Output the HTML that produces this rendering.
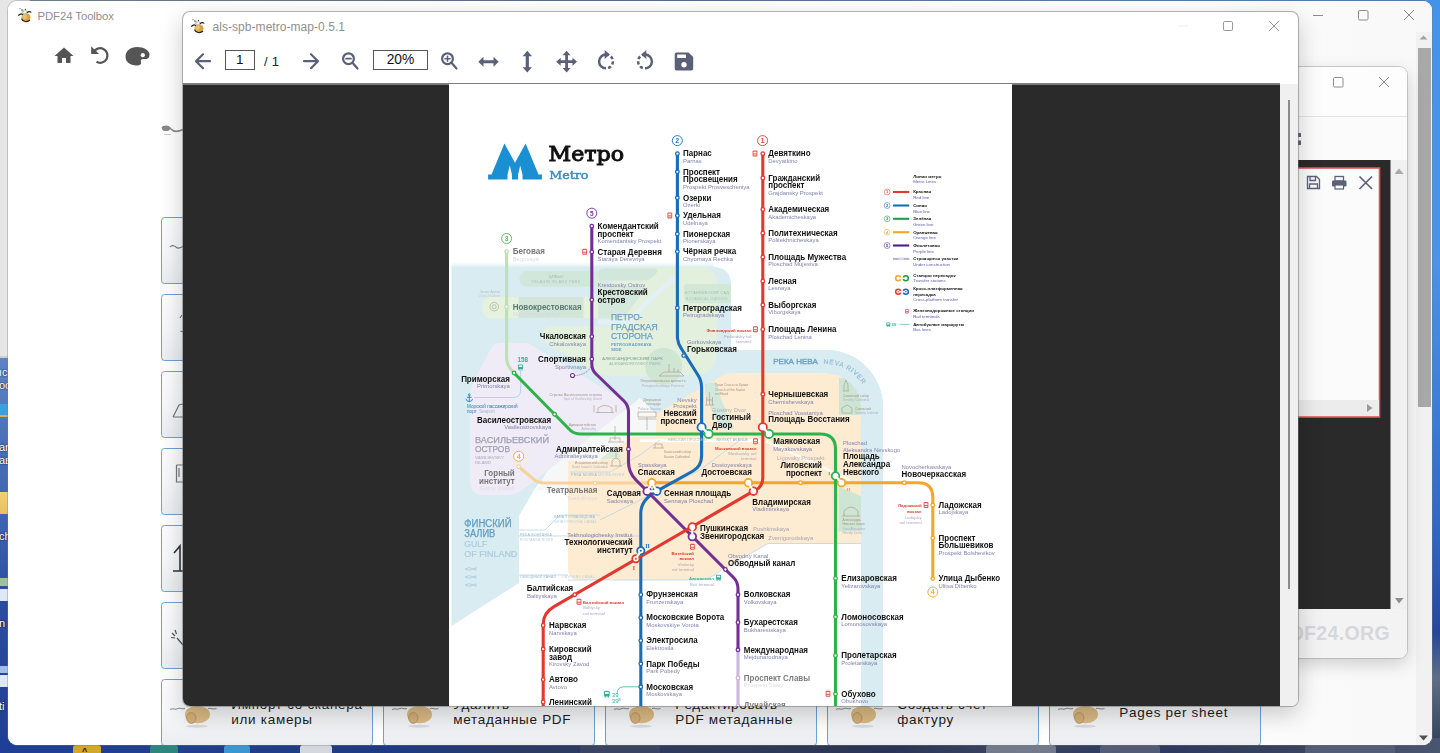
<!DOCTYPE html><html lang="ru"><head><meta charset="utf-8"><title>PDF24 Toolbox</title><style>
*{box-sizing:border-box;margin:0;padding:0}
html,body{width:1440px;height:753px;overflow:hidden;background:#1d3f8c;font-family:"Liberation Sans",sans-serif}
#desk{position:absolute;left:0;top:0;width:1440px;height:753px;overflow:hidden;
 background:linear-gradient(180deg,#3f78c9 0%,#4a8fe0 8%,#4a86d8 40%,#2f62b5 70%,#223f86 100%)}
.abs{position:absolute}
#tb{position:absolute;left:8px;top:1px;width:1424px;height:744px;background:#fff;border-radius:9px;overflow:hidden;
 box-shadow:0 0 0 1px rgba(120,120,120,.35)}
#tbbg{position:absolute;left:0;top:0;width:100%;height:100%;background:linear-gradient(90deg,#fff 0,#fff 1200px,#fafafa 1320px,#f8f8f8 100%)}
.ttl{position:absolute;font-size:12px;color:#8f8f8f;white-space:nowrap}
.card{position:absolute;width:212px;height:67px;border:1px solid #6aa2dc;border-radius:3.5px;
 background:linear-gradient(180deg,#fdfdfe 0%,#f6f7f9 55%,#ebedf1 100%)}
.ctxt{position:absolute;left:69.3px;font-size:13.5px;line-height:14.4px;color:#1c1c1c;letter-spacing:.7px;white-space:nowrap}
#w3{position:absolute;left:1290px;top:67px;width:117px;height:591px;background:#fbfbfb;border-radius:8px;overflow:hidden;
 box-shadow:0 0 0 1px rgba(150,150,150,.45),0 6px 18px rgba(0,0,0,.18)}
#vw{position:absolute;left:183px;top:12px;width:1114.5px;height:694px;background:#fff;border-radius:7px;overflow:hidden;
 box-shadow:0 0 0 1px rgba(110,110,110,.5),0 8px 24px rgba(0,0,0,.22)}
#vdark{position:absolute;left:0;top:72px;width:1097px;height:622px;background:#2a2a2a}
#vsb{position:absolute;left:1097px;top:72px;width:18px;height:622px;background:#f0f0f0}
#vline{position:absolute;left:0;top:71px;width:1097px;height:1.5px;background:#7d7d7d}
.inp{position:absolute;border:1px solid #555;background:#fff;font-size:13px;text-align:center;color:#111}
svg{position:absolute;overflow:visible}
</style></head><body><div id="desk"><div class="abs" style="left:0;top:0;width:9px;height:358px;background:#e6e6e6"></div><div class="abs" style="left:0;top:0;width:31px;height:12px;background:#e6e6e6"></div><div class="abs" style="left:0;top:356px;width:9px;height:2px;background:#cfcfcf"></div><div class="abs" style="left:0;top:358px;width:10px;height:395px;background:linear-gradient(180deg,#5f83c4 0,#4a6fb8 22%,#3b60ae 45%,#2b4aa0 62%,#233f95 100%)"></div><div class="abs" style="left:0;top:404px;width:9px;height:12px;background:#3aa0e0"></div><div class="abs" style="left:0;top:415px;width:9px;height:2px;background:#e0b050"></div><div class="abs" style="left:0;top:492px;width:9px;height:22px;background:linear-gradient(180deg,#f0d070,#e8c060)"></div><div class="abs" style="left:0;top:578px;width:8px;height:8px;background:#9fc48f"></div><div class="abs" style="left:0;top:589px;width:8px;height:12px;background:#dfe8f6"></div><div class="abs" style="left:0;top:666px;width:8px;height:7px;background:#9fbfea"></div><div class="abs" style="left:0;top:675px;width:8px;height:12px;background:#dfe8f6"></div><div class="abs" style="left:-1px;top:366px;font-size:11px;color:#fff;letter-spacing:0;text-shadow:0 0 2px #000">ıc</div><div class="abs" style="left:-1px;top:379px;font-size:11px;color:#fff;letter-spacing:0;text-shadow:0 0 2px #000">oc</div><div class="abs" style="left:-1px;top:441px;font-size:11px;color:#fff;letter-spacing:0;text-shadow:0 0 2px #000">ar</div><div class="abs" style="left:-1px;top:454px;font-size:11px;color:#fff;letter-spacing:0;text-shadow:0 0 2px #000">aв</div><div class="abs" style="left:-1px;top:530px;font-size:11px;color:#fff;letter-spacing:0;text-shadow:0 0 2px #000">ch</div><div class="abs" style="left:-1px;top:617px;font-size:11px;color:#fff;letter-spacing:0;text-shadow:0 0 2px #000">n</div><div class="abs" style="left:-1px;top:700px;font-size:11px;color:#fff;letter-spacing:0;text-shadow:0 0 2px #000">ti</div><div class="abs" style="left:30px;top:0;width:1410px;height:2px;background:linear-gradient(90deg,#6b7f9a,#46618f 40%,#4a7ab8 70%,#3d7fd0)"></div><div class="abs" style="left:1425px;top:0;width:15px;height:753px;background:linear-gradient(180deg,#4493ea 0,#4a93e6 35%,#3b7dd6 55%,#2f64bf 72%,#27469a 84%,#5f6f86 90%,#2d3b55 100%)"></div><div class="abs" style="left:0;top:738px;width:1440px;height:15px;background:linear-gradient(90deg,#1f3f96 0,#20408f 10%,#1e3a80 28%,#2a3a66 36%,#303a58 50%,#2b3456 62%,#3a4560 70%,#2c3860 80%,#39435e 90%,#4a5570 100%)"></div><div class="abs" style="left:73px;top:745px;width:28px;height:8px;background:#e5b41c;opacity:.9;border-radius:3px 3px 0 0"></div><div class="abs" style="left:150px;top:745px;width:28px;height:8px;background:#2f8f7c;opacity:.9;border-radius:3px 3px 0 0"></div><div class="abs" style="left:224px;top:745px;width:26px;height:8px;background:#3fa0d8;opacity:.9;border-radius:3px 3px 0 0"></div><div class="abs" style="left:300px;top:745px;width:32px;height:8px;background:#e8e8e8;opacity:.9;border-radius:3px 3px 0 0"></div><div class="abs" style="left:580px;top:745px;width:80px;height:8px;background:#3c4663;opacity:.9;border-radius:3px 3px 0 0"></div><div class="abs" style="left:986px;top:745px;width:70px;height:8px;background:#7a8190;opacity:.9;border-radius:3px 3px 0 0"></div><div class="abs" style="left:1100px;top:745px;width:60px;height:8px;background:#58617a;opacity:.9;border-radius:3px 3px 0 0"></div><div class="abs" style="left:1305px;top:745px;width:90px;height:8px;background:#555f78;opacity:.9;border-radius:3px 3px 0 0"></div><div class="abs" style="left:82px;top:746px;font-size:9px;font-weight:bold;color:#222">^</div></div><div id="tb"><div id="tbbg"></div><svg style="left:8.5px;top:5.5px" width="16.2" height="16.2" viewBox="0 0 18 18"><ellipse cx="10" cy="11.5" rx="5" ry="4.6" fill="#d9a441"/><ellipse cx="8.5" cy="10.5" rx="2.5" ry="3" fill="#e8c36a"/><path d="M5 13 C6 16.5 11.5 17.3 14.5 14.5" fill="none" stroke="#222" stroke-width="1.3"/><path d="M1.5 9.5 C3 7.5 5 7.3 6.5 8.5" fill="none" stroke="#222" stroke-width="1.4"/><path d="M11 6.5 C12.5 4.8 14.5 5 16 6" fill="none" stroke="#222" stroke-width="1.2"/><ellipse cx="8.3" cy="5.6" rx="2.6" ry="2.2" fill="#f4f4f4" stroke="#777" stroke-width=".5"/><circle cx="5.5" cy="3.3" r=".8" fill="#333"/><circle cx="9.5" cy="2.6" r=".7" fill="#333"/><circle cx="3.3" cy="1.8" r=".6" fill="#555"/><circle cx="7.5" cy="5.2" r=".6" fill="#7a9a2a"/></svg><div class="ttl" style="left:29.5px;top:8.5px;font-size:11.4px;letter-spacing:-.1px">PDF24 Toolbox</div><svg style="left:0;top:0" width="200" height="80" viewBox="8 1 200 80"><g fill="#555"><path d="M64 47.5 L54.5 56 H57.5 V63 H62 V58 H66 V63 H70.5 V56 H73.5 Z"/><path d="M125.5 56.5 C125.5 51 130.5 47 137 47 C144 47 149.5 50.5 149.5 55 C149.5 58.5 146.5 59.5 144 59 C141.5 58.6 140.2 60 141 62 C141.8 64 140 65.5 136.5 65.5 C130 65.5 125.5 62 125.5 56.5 Z"/></g><circle cx="142.8" cy="55.2" r="2.1" fill="#fff"/><path d="M93.5 52.5 A7.3 7.3 0 1 1 96.5 61.8" fill="none" stroke="#555" stroke-width="2.3"/><path d="M91.2 46.2 V54 H99 Z" fill="#555"/></svg><svg style="left:0;top:0" width="1424" height="40" viewBox="8 1 1424 40"><g fill="none" stroke="#8c8c8c" stroke-width="1"><path d="M1313 15.5 H1323"/><rect x="1358.5" y="10.5" width="9.5" height="9.5" rx="1.3"/><path d="M1404 10 L1414 20 M1414 10 L1404 20"/></g></svg><div class="abs" style="left:1408px;top:31px;width:16px;height:713px;background:#f1f1f1"></div><div class="abs" style="left:1409.5px;top:47px;width:13px;height:359px;background:#a8a8a8"></div><svg style="left:0;top:0" width="1424" height="744" viewBox="8 1 1424 744"><path d="M1419.5 39.5 L1427.5 39.5 L1423.5 35.5 Z" fill="#a3a3a3"/><path d="M1419 735.5 L1428 735.5 L1423.5 740.5 Z" fill="#505050"/></svg><svg style="left:0;top:0" width="300" height="200" viewBox="8 1 300 200"><path d="M162 128 C164 125 169 126 171 129 C174 132.5 178 132 183 129.5" fill="none" stroke="#8a8a8a" stroke-width="1.6"/><ellipse cx="166" cy="128.5" rx="4" ry="2.6" fill="#8a8a8a"/><path d="M164 134.5 H171" stroke="#cfcfcf" stroke-width="1"/></svg><div class="card" style="left:153px;top:216px"></div><div class="card" style="left:153px;top:293px"></div><div class="card" style="left:153px;top:370px"></div><div class="card" style="left:153px;top:447px"></div><div class="card" style="left:153px;top:524px"></div><div class="card" style="left:153px;top:601px"></div><div class="card" style="left:153px;top:678px"><svg style="left:8px;top:20px" width="52" height="32" viewBox="0 0 52 32"><path d="M0 9.5 C3 7.5 5 10.5 8 8.5 C10 7.5 12 9.5 15 8.5" fill="none" stroke="#8a8a8a" stroke-width="1"/><path d="M38 8.5 C40.5 7.5 43 10 46.5 8.5" fill="none" stroke="#8a8a8a" stroke-width="1"/><ellipse cx="27.5" cy="14.5" rx="12.5" ry="8.8" fill="#dcbb85"/><ellipse cx="21.3" cy="18" rx="4.7" ry="5.4" fill="#d4b077" stroke="#a98d5c" stroke-width=".7"/><ellipse cx="27" cy="26.3" rx="11" ry="1.5" fill="#dadadd"/></svg><div class="ctxt" style="top:18.4px">Импорт со сканера<br>или камеры</div></div><div class="card" style="left:375px;top:678px"><svg style="left:8px;top:20px" width="52" height="32" viewBox="0 0 52 32"><path d="M0 9.5 C3 7.5 5 10.5 8 8.5 C10 7.5 12 9.5 15 8.5" fill="none" stroke="#8a8a8a" stroke-width="1"/><path d="M38 8.5 C40.5 7.5 43 10 46.5 8.5" fill="none" stroke="#8a8a8a" stroke-width="1"/><ellipse cx="27.5" cy="14.5" rx="12.5" ry="8.8" fill="#dcbb85"/><ellipse cx="21.3" cy="18" rx="4.7" ry="5.4" fill="#d4b077" stroke="#a98d5c" stroke-width=".7"/><ellipse cx="27" cy="26.3" rx="11" ry="1.5" fill="#dadadd"/></svg><div class="ctxt" style="top:18.4px">Удалить<br>метаданные PDF</div></div><div class="card" style="left:597px;top:678px"><svg style="left:8px;top:20px" width="52" height="32" viewBox="0 0 52 32"><path d="M0 9.5 C3 7.5 5 10.5 8 8.5 C10 7.5 12 9.5 15 8.5" fill="none" stroke="#8a8a8a" stroke-width="1"/><path d="M38 8.5 C40.5 7.5 43 10 46.5 8.5" fill="none" stroke="#8a8a8a" stroke-width="1"/><ellipse cx="27.5" cy="14.5" rx="12.5" ry="8.8" fill="#dcbb85"/><ellipse cx="21.3" cy="18" rx="4.7" ry="5.4" fill="#d4b077" stroke="#a98d5c" stroke-width=".7"/><ellipse cx="27" cy="26.3" rx="11" ry="1.5" fill="#dadadd"/></svg><div class="ctxt" style="top:18.4px">Редактировать<br>PDF метаданные</div></div><div class="card" style="left:819px;top:678px"><svg style="left:8px;top:20px" width="52" height="32" viewBox="0 0 52 32"><path d="M0 9.5 C3 7.5 5 10.5 8 8.5 C10 7.5 12 9.5 15 8.5" fill="none" stroke="#8a8a8a" stroke-width="1"/><path d="M38 8.5 C40.5 7.5 43 10 46.5 8.5" fill="none" stroke="#8a8a8a" stroke-width="1"/><ellipse cx="27.5" cy="14.5" rx="12.5" ry="8.8" fill="#dcbb85"/><ellipse cx="21.3" cy="18" rx="4.7" ry="5.4" fill="#d4b077" stroke="#a98d5c" stroke-width=".7"/><ellipse cx="27" cy="26.3" rx="11" ry="1.5" fill="#dadadd"/></svg><div class="ctxt" style="top:18.4px">Создать счет-<br>фактуру</div></div><div class="card" style="left:1041px;top:678px"><svg style="left:8px;top:20px" width="52" height="32" viewBox="0 0 52 32"><path d="M0 9.5 C3 7.5 5 10.5 8 8.5 C10 7.5 12 9.5 15 8.5" fill="none" stroke="#8a8a8a" stroke-width="1"/><path d="M38 8.5 C40.5 7.5 43 10 46.5 8.5" fill="none" stroke="#8a8a8a" stroke-width="1"/><ellipse cx="27.5" cy="14.5" rx="12.5" ry="8.8" fill="#dcbb85"/><ellipse cx="21.3" cy="18" rx="4.7" ry="5.4" fill="#d4b077" stroke="#a98d5c" stroke-width=".7"/><ellipse cx="27" cy="26.3" rx="11" ry="1.5" fill="#dadadd"/></svg><div class="ctxt" style="top:25.9px">Pages per sheet</div></div><svg style="left:0;top:0" width="300" height="744" viewBox="8 1 300 744"><g fill="none" stroke="#777" stroke-width="1.2"><path d="M170 247 C172 244.5 175 246 176.5 247.5 C178 249 180 248 183 246.5"/><path d="M180 318 l2 -3 M180.5 331 l2.5 1"/><path d="M173 417 L179 405 L183 404 M173 417 H183"/><path d="M176.5 465 V482 H183 M176.5 465 H183 M179 468 v9"/><path d="M174 553 L180 546 V571 M173 571 H183" stroke="#333" stroke-width="1.6"/><path d="M172 633 l3 3 M175 630 l1.5 4 M171 637.5 l4 .5 M177 638 L183 645" stroke="#555"/></g></svg></div><div id="w3"><div class="abs" style="left:0;top:0;width:117px;height:50px;background:#fdfdfd;border-bottom:1px solid #e3e3e3"></div><svg style="left:0;top:0" width="117" height="591" viewBox="1290 67 117 591"><g fill="none" stroke="#8c8c8c" stroke-width="1"><rect x="1333.5" y="77.5" width="9.5" height="9.5" rx="1.3"/><path d="M1379 77 L1389 87 M1389 77 L1379 87"/></g><rect x="1297" y="133" width="4" height="4" fill="#5d6279"/><rect x="1297" y="140.5" width="4" height="4.5" fill="#5d6279"/><rect x="1390" y="160" width="17" height="449" fill="#f0f0f0"/><rect x="1290" y="160" width="100.5" height="449" fill="#2a2a2a"/><rect x="1290" y="168" width="89.5" height="249" fill="#fbfbfb" stroke="#e0545c" stroke-width="1.6"/><rect x="1290" y="400" width="89" height="16" fill="#ececec"/><path d="M1367 404 L1372.5 408 L1367 412 Z" fill="#9a9a9a"/><g fill="none" stroke="#5d6279" stroke-width="1.3"><path d="M1307.5 176.5 H1316.5 L1319.5 179.5 V188.5 H1307.5 Z"/><path d="M1310 176.5 V180.5 H1315.5 V176.5"/><path d="M1309.5 188.5 V184 H1317.5 V188.5"/></g><g fill="#5d6279"><rect x="1335" y="176.5" width="8.5" height="4.5" fill="none" stroke="#5d6279" stroke-width="1.3"/><rect x="1332" y="180.5" width="14.5" height="6" rx="1.2"/><rect x="1335" y="185" width="8.5" height="4" fill="#fff" stroke="#5d6279" stroke-width="1.2"/></g><path d="M1359.5 176.5 L1372 189 M1372 176.5 L1359.5 189" stroke="#5d6279" stroke-width="1.7" fill="none"/><path d="M1394.5 174 L1403.5 174 L1399 168.5 Z" fill="#a9a9a9"/><path d="M1395 598 L1403.5 598 L1399 603.5 Z" fill="#8f8f8f"/><rect x="1290" y="609" width="117" height="49" fill="#f3f3f3"/><text x="1390" y="640" text-anchor="end" font-family="Liberation Sans,sans-serif" font-weight="bold" font-size="19.5" fill="#d6d7db" letter-spacing=".35">PDF24.ORG</text></svg></div><div id="vw"><svg style="left:7px;top:5.5px" width="16.2" height="16.2" viewBox="0 0 18 18"><ellipse cx="10" cy="11.5" rx="5" ry="4.6" fill="#d9a441"/><ellipse cx="8.5" cy="10.5" rx="2.5" ry="3" fill="#e8c36a"/><path d="M5 13 C6 16.5 11.5 17.3 14.5 14.5" fill="none" stroke="#222" stroke-width="1.3"/><path d="M1.5 9.5 C3 7.5 5 7.3 6.5 8.5" fill="none" stroke="#222" stroke-width="1.4"/><path d="M11 6.5 C12.5 4.8 14.5 5 16 6" fill="none" stroke="#222" stroke-width="1.2"/><ellipse cx="8.3" cy="5.6" rx="2.6" ry="2.2" fill="#f4f4f4" stroke="#777" stroke-width=".5"/><circle cx="5.5" cy="3.3" r=".8" fill="#333"/><circle cx="9.5" cy="2.6" r=".7" fill="#333"/><circle cx="3.3" cy="1.8" r=".6" fill="#555"/><circle cx="7.5" cy="5.2" r=".6" fill="#7a9a2a"/></svg><div class="ttl" style="left:29.5px;top:8px;letter-spacing:.05px">als-spb-metro-map-0.5.1</div><svg style="left:0;top:0" width="1115" height="72" viewBox="183 12 1115 72"><g fill="none" stroke="#9a9a9a" stroke-width="1"><rect x="1223.5" y="21.5" width="9" height="9" rx="1.3"/><path d="M1269 21 L1279 31 M1279 21 L1269 31"/><path d="M1178 26 H1188" stroke="#ececec"/></g><g fill="none" stroke="#5a6078" stroke-width="2.2" stroke-linecap="round" stroke-linejoin="round"><path d="M210 61.2 H196.5 M203 54.3 L196 61.2 L203 68.2"/><path d="M304 61.2 H317.5 M311 54.3 L318 61.2 L311 68.2"/><circle cx="348.5" cy="58.7" r="5.4"/><path d="M352.7 63 L357.5 68.5"/><path d="M346 58.7 H351" stroke-width="1.7"/><circle cx="447.5" cy="58.7" r="5.4"/><path d="M451.7 63 L456.5 68.5"/><path d="M445 58.7 H450 M447.5 56.2 V61.2" stroke-width="1.6"/></g><g fill="#5a6078"><path d="M478.3 61.8 L483.5 56.8 V60.3 H493.5 V56.8 L498.7 61.8 L493.5 66.8 V63.3 H483.5 V66.8 Z"/><path d="M527.3 50.8 L532 56.2 H528.9 V67.2 H532 L527.3 72.6 L522.6 67.2 H525.7 V56.2 H522.6 Z"/><path d="M566.6 50.8 L570.6 55.3 H568 V60.3 H572.5 V57.7 L577 61.7 L572.5 65.7 V63.1 H568 V68 H570.6 L566.6 72.5 L562.6 68 H565.2 V63.1 H560.7 V65.7 L556.2 61.7 L560.7 57.7 V60.3 H565.2 V55.3 H562.6 Z"/><path d="M676.7 52.4 H688.5 L693.2 57 V68.6 Q693.2 70.6 691.2 70.6 H676.7 Q674.7 70.6 674.7 68.6 V54.4 Q674.7 52.4 676.7 52.4 Z M677.2 54.6 V57.9 H686 V54.6 Z M684 62 A2.7 2.7 0 1 0 684 67.4 A2.7 2.7 0 1 0 684 62 Z" fill-rule="evenodd"/><path d="M604.7 49.9 L609.7 54.4 L604.7 58.9 Z"/><path d="M646.3 49.9 L641.3 54.4 L646.3 58.9 Z"/></g><g fill="none" stroke="#5a6078" stroke-width="2.5"><path d="M606 54.5 A6.9 6.9 0 0 0 606 68.3"/><path d="M606 68.3 A6.9 6.9 0 0 0 606 54.5" stroke-dasharray="3.2 2.2" stroke-dashoffset="3.2"/><path d="M645 54.5 A6.9 6.9 0 0 1 645 68.3"/><path d="M645 68.3 A6.9 6.9 0 0 1 645 54.5" stroke-dasharray="3.2 2.2" stroke-dashoffset="3.2"/></g></svg><div class="inp" style="left:42px;top:38px;width:29.5px;height:20px;line-height:18px;font-size:13.5px">1</div><div class="abs" style="left:81px;top:41.5px;font-size:13px;color:#222;letter-spacing:.3px">/ 1</div><div class="inp" style="left:190px;top:38px;width:55px;height:20px;line-height:18px;font-size:13.8px">20%</div><div id="vdark"></div><div id="vline"></div><div id="vsb"></div><div class="abs" style="left:1104.5px;top:88px;width:2px;height:489px;background:#8a8a8a"></div><div class="abs" style="left:266px;top:72px;width:563px;height:622px;background:#fff;overflow:hidden"><svg style="left:0;top:0;will-change:transform" width="563" height="622" viewBox="449 84 563 622" font-family="Liberation Sans,sans-serif" font-size="9" font-weight="bold" fill="#111"><defs><linearGradient id="wf" x1="0" y1="0" x2="0" y2="1"><stop offset="0" stop-color="#fff"/><stop offset="1" stop-color="#d8ecf2"/></linearGradient></defs><path d="M451.5 267 H713 Q731 267 731 285 V350 H826 A57 57 0 0 1 883 407 V706 H861 V407 A34 34 0 0 0 827 373.5 H735 L640 430 L540 482 L534 490 L519 516 V583 L451.5 626 Z" fill="#d8ecf2"/><rect x="451.5" y="262" width="262" height="6" fill="url(#wf)"/><path d="M640 398 L656 414 V437 H632 L598 461 H568 V490 H536 L548 470 Z" fill="#f6f8f7"/><rect x="519.5" y="270.8" width="89.5" height="16" rx="8" fill="#d9eadf"/><path d="M527.5 270.8 H590 V286.8 H527.5 A8 8 0 0 1 527.5 270.8 Z" fill="#d2e7dc"/><path d="M490 297 H610 Q622 297 622 305 V312 Q622 318 612 318 H490 Q482 318 482 307.5 Q482 297 490 297 Z" fill="#e6f1de"/><rect x="518.5" y="297" width="65" height="21" fill="#d2e5d8"/><path d="M556 326 H606 Q612 326 612 318 V284 Q612 267 628 267 H700 Q717 267 717 284 V350 Q717 372 700 374 L652 376 H612 Q602 376 594 371.5 L548 345 Q539 339.5 542 332.5 Q545 326 556 326 Z" fill="#e4f0de"/><path d="M686 284 H728 Q731 284 731 288 V300 Q731 303 728 303 H690 Q684 303 684 296 V288 Q684 284 686 284 Z" fill="#d3e7d6"/><circle cx="663.7" cy="366.3" r="18.5" fill="#d0e6d4"/><path d="M600 322 H630 L645 304 L673 279" fill="none" stroke="#e2f1f5" stroke-width="5" stroke-linecap="round" stroke-linejoin="round"/><path d="M604 268.5 H652 Q660 268.5 656 274 L650 279 Q648 280.5 644 280.5 H604 Q598 280.5 598 274.5 Q598 268.5 604 268.5Z" fill="#d2e7dc"/><path d="M598 291 Q598 286 604 286 H640 Q648 286 643 292 L628 312 Q624 318 616 318 H598 Z" fill="#d4e8dc"/><path d="M500 343 H528 L622 399.5 Q629 404 623 411 L524 489 Q516 495 506 495 H484 Q470 495 470 481 V396 Q470 388 474 380 L490 350 Q494 343 500 343 Z" fill="#efebf7"/><path d="M726 373.5 H827 A34 34 0 0 1 861 407 V543.5 H768 L720 571 Q710 580 698 580 H580 Q568 580 568 568 V461 H598 L632 437 H656 V414 Z" fill="#fdebd2"/><path d="M600 459 L617 446 L621 459 Z" fill="#dcebd8"/><rect x="839" y="378" width="22" height="37" fill="#cfe5d3"/><path d="M838.5 486.5 L861 496 V531.5 H838.5 Z" fill="#cfe5d3"/><path d="M705 384 L716 382 Q722 405 734 429 H721 Q711 410 705 394 Z" fill="#d3e8dc"/><path d="M766 441 L850 480" stroke="#fff" stroke-width="2.6" opacity=".75"/><path d="M826 350 A57 57 0 0 1 883 407 V706 H861 V407 A34 34 0 0 0 827 373.5 Z" fill="#d8ecf2"/><rect x="640" y="439" width="120" height="3.2" fill="#fff" opacity=".9"/><g fill="none" stroke="#b9d6e6" stroke-width=".8"><path d="M519 530 H545 L560 515 H600"/><path d="M519 536 H640"/><path d="M519 575 H568"/><path d="M568 580 H698 Q710 580 720 571 L768 543.5 H861"/><path d="M570 472 H610 L640 455 L660 440"/><path d="M600 520 L640 500 L700 470 L740 440"/><path d="M520.6 370 V390 Q520.6 397.5 513 397.5 H474" stroke="#9ccbe0" stroke-width=".7"/></g><g fill="none" stroke-width="3.1" stroke-linejoin="round" stroke-linecap="round"><path d="M506.6 251.6 V358 Q506.6 366 514.1 373" stroke="#bfe0b7"/><path d="M518.7 466.7 L534 479.5 Q538.5 483 545 483 H651.8" stroke="#f9d29b"/><path d="M738 650 V706" stroke="#cbb6dc"/><path d="M651.8 482.7 H918 Q932.8 482.7 932.8 497.5 V578.6" stroke="#f4a62a"/><path d="M514.1 373 L570 430 Q574 434 581 434 H820 Q835.5 434 835.5 449 V706" stroke="#2fb24c"/><path d="M677.4 153.7 V336 Q677.4 343 681 348 L698.5 376 Q701.6 381 701.6 388 V456 Q701.6 466 693 471 L656.8 491.2 Q640.8 500 640.8 513 V706" stroke="#1a6db9"/><path d="M591.8 226.2 V364 Q591.8 370 596 374 L624 401 Q628.5 405.5 628.5 412 V462 Q628.5 472.5 636 480 L725.4 569.5 L733.5 577.5 Q738 582 738 589 V650" stroke="#742f93"/><path d="M762.8 153.7 V478 Q762.8 486 756 490 L753.4 491.2 L554 606.6 Q543.2 612.9 543.2 624 V706" stroke="#e2382f"/></g><path d="M572.5 375.5 Q586 376 591.5 366" fill="none" stroke="#742f93" stroke-width=".6" stroke-dasharray="1.2 .8"/><circle cx="572.5" cy="375.5" r="2" fill="#fff" stroke="#742f93" stroke-width="1.1"/><path d="M640 686.8 H624 Q617 686.8 617 694" fill="none" stroke="#3fb39a" stroke-width=".8"/><circle cx="701.6" cy="427.3" r="4.1" fill="#fff" stroke="#1a6db9" stroke-width="1.8"/><circle cx="708.6" cy="433.9" r="4.1" fill="#fff" stroke="#2fb24c" stroke-width="1.8"/><path d="M701.6 427.3 L708.6 433.9" stroke="#fff" stroke-width="2.2"/><circle cx="762.8" cy="427.3" r="4.1" fill="#fff" stroke="#e2382f" stroke-width="1.8"/><circle cx="769" cy="433.9" r="4.1" fill="#fff" stroke="#2fb24c" stroke-width="1.8"/><path d="M762.8 427.3 L769 433.9" stroke="#fff" stroke-width="2.2"/><circle cx="651.8" cy="482.7" r="3.8" fill="#fff" stroke="#f4a62a" stroke-width="1.8"/><circle cx="647.2" cy="491.2" r="3.8" fill="#fff" stroke="#742f93" stroke-width="1.8"/><circle cx="656.8" cy="491.2" r="3.8" fill="#fff" stroke="#1a6db9" stroke-width="1.8"/><path d="M651.8 482.7 L647.2 491.2" stroke="#fff" stroke-width="2.2"/><path d="M651.8 482.7 L656.8 491.2" stroke="#fff" stroke-width="2.2"/><path d="M647.2 491.2 L656.8 491.2" stroke="#fff" stroke-width="2.2"/><circle cx="748.4" cy="482.7" r="3.8" fill="#fff" stroke="#f4a62a" stroke-width="1.8"/><circle cx="753.4" cy="491.2" r="3.8" fill="#fff" stroke="#e2382f" stroke-width="1.8"/><path d="M748.4 482.7 L753.4 491.2" stroke="#fff" stroke-width="2.2"/><circle cx="692.3" cy="527" r="3.8" fill="#fff" stroke="#e2382f" stroke-width="1.8"/><circle cx="692.3" cy="536.6" r="3.8" fill="#fff" stroke="#742f93" stroke-width="1.8"/><path d="M692.3 527 L692.3 536.6" stroke="#fff" stroke-width="2.2"/><circle cx="640.8" cy="550.8" r="3.6" fill="#fff" stroke="#1a6db9" stroke-width="1.8"/><circle cx="635.9" cy="558.8" r="3.6" fill="#fff" stroke="#e2382f" stroke-width="1.8"/><path d="M640.8 550.8 L635.9 558.8" stroke="#fff" stroke-width="2.2"/><circle cx="835.5" cy="476" r="3.8" fill="#fff" stroke="#2fb24c" stroke-width="1.8"/><circle cx="841.5" cy="482.7" r="3.8" fill="#fff" stroke="#f4a62a" stroke-width="1.8"/><path d="M835.5 476 L841.5 482.7" stroke="#fff" stroke-width="2.2"/><circle cx="640.8" cy="550.8" r="1" fill="#1a6db9"/><circle cx="635.9" cy="558.8" r="1" fill="#e2382f"/><g fill="#fff" stroke-width="1.3"><circle cx="677.4" cy="153.7" r="1.8" stroke="#1a6db9"/><circle cx="677.4" cy="171.8" r="1.8" stroke="#1a6db9"/><circle cx="677.4" cy="197.8" r="1.8" stroke="#1a6db9"/><circle cx="677.4" cy="215.6" r="1.8" stroke="#1a6db9"/><circle cx="677.4" cy="234" r="1.8" stroke="#1a6db9"/><circle cx="677.4" cy="251.6" r="1.8" stroke="#1a6db9"/><circle cx="677.4" cy="307.9" r="1.8" stroke="#1a6db9"/><circle cx="683.7" cy="355.6" r="1.8" stroke="#1a6db9"/><circle cx="640.8" cy="594.7" r="1.8" stroke="#1a6db9"/><circle cx="640.8" cy="617.7" r="1.8" stroke="#1a6db9"/><circle cx="640.8" cy="640.6" r="1.8" stroke="#1a6db9"/><circle cx="640.8" cy="663.8" r="1.8" stroke="#1a6db9"/><circle cx="640.8" cy="686.8" r="1.8" stroke="#1a6db9"/><circle cx="762.8" cy="153.7" r="1.8" stroke="#e2382f"/><circle cx="762.8" cy="178" r="1.8" stroke="#e2382f"/><circle cx="762.8" cy="209.5" r="1.8" stroke="#e2382f"/><circle cx="762.8" cy="233.2" r="1.8" stroke="#e2382f"/><circle cx="762.8" cy="257.2" r="1.8" stroke="#e2382f"/><circle cx="762.8" cy="281.2" r="1.8" stroke="#e2382f"/><circle cx="762.8" cy="305" r="1.8" stroke="#e2382f"/><circle cx="762.8" cy="329.4" r="1.8" stroke="#e2382f"/><circle cx="762.8" cy="394.3" r="1.8" stroke="#e2382f"/><circle cx="574.8" cy="594.7" r="1.8" stroke="#e2382f"/><circle cx="543.2" cy="625.4" r="1.8" stroke="#e2382f"/><circle cx="543.2" cy="649.2" r="1.8" stroke="#e2382f"/><circle cx="543.2" cy="679.6" r="1.8" stroke="#e2382f"/><circle cx="543.2" cy="702" r="1.8" stroke="#e2382f"/><circle cx="506.6" cy="251.6" r="1.8" stroke="#bfe0b7"/><circle cx="506.6" cy="306.7" r="1.8" stroke="#bfe0b7"/><circle cx="514.1" cy="373" r="1.8" stroke="#2fb24c"/><circle cx="554.6" cy="414.3" r="1.8" stroke="#2fb24c"/><circle cx="835.5" cy="578.4" r="1.8" stroke="#2fb24c"/><circle cx="835.5" cy="616.8" r="1.8" stroke="#2fb24c"/><circle cx="835.5" cy="655.5" r="1.8" stroke="#2fb24c"/><circle cx="835.5" cy="694" r="1.8" stroke="#2fb24c"/><circle cx="518.7" cy="466.7" r="1.8" stroke="#f9d29b"/><circle cx="595" cy="483.2" r="1.8" stroke="#f9d29b"/><circle cx="800.5" cy="482.7" r="1.8" stroke="#f4a62a"/><circle cx="904.3" cy="482.7" r="1.8" stroke="#f4a62a"/><circle cx="932.8" cy="505.2" r="1.8" stroke="#f4a62a"/><circle cx="932.8" cy="538" r="1.8" stroke="#f4a62a"/><circle cx="932.8" cy="578.6" r="1.8" stroke="#f4a62a"/><circle cx="591.8" cy="226.2" r="1.8" stroke="#742f93"/><circle cx="591.8" cy="251.9" r="1.8" stroke="#742f93"/><circle cx="591.8" cy="299.8" r="1.8" stroke="#742f93"/><circle cx="591.8" cy="336.6" r="1.8" stroke="#742f93"/><circle cx="591.8" cy="359.1" r="1.8" stroke="#742f93"/><circle cx="628.5" cy="449.2" r="1.8" stroke="#742f93"/><circle cx="725.4" cy="569.5" r="1.8" stroke="#742f93"/><circle cx="738" cy="594.7" r="1.8" stroke="#742f93"/><circle cx="738" cy="622.5" r="1.8" stroke="#742f93"/><circle cx="738" cy="649.8" r="1.8" stroke="#742f93"/><circle cx="738" cy="678" r="1.8" stroke="#cbb6dc"/><circle cx="738" cy="706" r="1.8" stroke="#cbb6dc"/></g><circle cx="677.3" cy="140.6" r="5" fill="#fff" stroke="#1a6db9" stroke-width="0.9"/><text x="677.3" y="142.9" text-anchor="middle" font-size="6.5" fill="#1a6db9">2</text><circle cx="762.6" cy="140.6" r="5" fill="#fff" stroke="#e2382f" stroke-width="0.9"/><text x="762.6" y="142.9" text-anchor="middle" font-size="6.5" fill="#e2382f">1</text><circle cx="591.8" cy="213.2" r="5" fill="#fff" stroke="#742f93" stroke-width="0.9"/><text x="591.8" y="215.5" text-anchor="middle" font-size="6.5" fill="#742f93">5</text><circle cx="506.6" cy="238.5" r="5" fill="#fff" stroke="#4db85c" stroke-width="0.9"/><text x="506.6" y="240.8" text-anchor="middle" font-size="6.5" fill="#4db85c">3</text><circle cx="518.7" cy="456.3" r="5" fill="#fff" stroke="#f4a62a" stroke-width="0.9"/><text x="518.7" y="458.6" text-anchor="middle" font-size="6.5" fill="#f4a62a">4</text><circle cx="932.8" cy="592" r="5" fill="#fff" stroke="#f4a62a" stroke-width="0.9"/><text x="932.8" y="594.3" text-anchor="middle" font-size="6.5" fill="#f4a62a">4</text><g transform="translate(669.8 215.6) scale(1)"><rect x="-2.4" y="-3.2" width="4.8" height="6" rx="1" fill="#e5524a"/><rect x="-1.5" y="-2" width="3" height="1.8" fill="#fff"/><rect x="-1.5" y=".8" width="3" height=".9" fill="#fff"/></g><g transform="translate(755 153.7) scale(1)"><rect x="-2.4" y="-3.2" width="4.8" height="6" rx="1" fill="#e5524a"/><rect x="-1.5" y="-2" width="3" height="1.8" fill="#fff"/><rect x="-1.5" y=".8" width="3" height=".9" fill="#fff"/></g><g transform="translate(584.6 251.9) scale(1)"><rect x="-2.4" y="-3.2" width="4.8" height="6" rx="1" fill="#e5524a"/><rect x="-1.5" y="-2" width="3" height="1.8" fill="#fff"/><rect x="-1.5" y=".8" width="3" height=".9" fill="#fff"/></g><g transform="translate(755.5 329.4) scale(1)"><rect x="-2.4" y="-3.2" width="4.8" height="6" rx="1" fill="#e5524a"/><rect x="-1.5" y="-2" width="3" height="1.8" fill="#fff"/><rect x="-1.5" y=".8" width="3" height=".9" fill="#fff"/></g><g transform="translate(755.5 441.5) scale(1)"><rect x="-2.4" y="-3.2" width="4.8" height="6" rx="1" fill="#e5524a"/><rect x="-1.5" y="-2" width="3" height="1.8" fill="#fff"/><rect x="-1.5" y=".8" width="3" height=".9" fill="#fff"/></g><g transform="translate(692.4 547) scale(1)"><rect x="-2.4" y="-3.2" width="4.8" height="6" rx="1" fill="#e5524a"/><rect x="-1.5" y="-2" width="3" height="1.8" fill="#fff"/><rect x="-1.5" y=".8" width="3" height=".9" fill="#fff"/></g><g transform="translate(579 601.9) scale(1)"><rect x="-2.4" y="-3.2" width="4.8" height="6" rx="1" fill="#e5524a"/><rect x="-1.5" y="-2" width="3" height="1.8" fill="#fff"/><rect x="-1.5" y=".8" width="3" height=".9" fill="#fff"/></g><g transform="translate(926 505.2) scale(1)"><rect x="-2.4" y="-3.2" width="4.8" height="6" rx="1" fill="#e5524a"/><rect x="-1.5" y="-2" width="3" height="1.8" fill="#fff"/><rect x="-1.5" y=".8" width="3" height=".9" fill="#fff"/></g><g transform="translate(828 694) scale(1)"><rect x="-2.4" y="-3.2" width="4.8" height="6" rx="1" fill="#e5524a"/><rect x="-1.5" y="-2" width="3" height="1.8" fill="#fff"/><rect x="-1.5" y=".8" width="3" height=".9" fill="#fff"/></g><g transform="translate(520.5 367.2) scale(0.98)"><rect x="-2.6" y="-2.8" width="5.2" height="5" rx="1" fill="#2fb39a"/><rect x="-1.7" y="-1.8" width="3.4" height="1.6" fill="#fff"/><rect x="-2" y="2.2" width="1.2" height="1" fill="#2fb39a"/><rect x=".8" y="2.2" width="1.2" height="1" fill="#2fb39a"/></g><g transform="translate(718.5 577.5) scale(1)"><rect x="-2.6" y="-2.8" width="5.2" height="5" rx="1" fill="#2fb39a"/><rect x="-1.7" y="-1.8" width="3.4" height="1.6" fill="#fff"/><rect x="-2" y="2.2" width="1.2" height="1" fill="#2fb39a"/><rect x=".8" y="2.2" width="1.2" height="1" fill="#2fb39a"/></g><g transform="translate(606.8 694) scale(1.1)"><rect x="-2.6" y="-2.8" width="5.2" height="5" rx="1" fill="#2fb39a"/><rect x="-1.7" y="-1.8" width="3.4" height="1.6" fill="#fff"/><rect x="-2" y="2.2" width="1.2" height="1" fill="#2fb39a"/><rect x=".8" y="2.2" width="1.2" height="1" fill="#2fb39a"/></g><text x="522.7" y="362.3" text-anchor="middle" fill="#2fb39a" font-size="6.3">158</text><text x="611.8" y="696.5" font-weight="normal" fill="#2fb39a" font-size="6">39</text><text x="611.8" y="703.3" font-weight="normal" fill="#2fb39a" font-size="6">39ᴱ</text><text transform="translate(683 156.4) scale(0.89 1)">Парнас</text><text x="683" y="162.9" font-weight="normal" fill="#8383ad" font-size="5.9">Parnas</text><text transform="translate(683 174.5) scale(0.89 1)">Проспект</text><text transform="translate(683 182.2) scale(0.89 1)">Просвещения</text><text x="683" y="188.7" font-weight="normal" fill="#8383ad" font-size="5.9">Prospekt Prosvescheniya</text><text transform="translate(683 200.5) scale(0.89 1)">Озерки</text><text x="683" y="207" font-weight="normal" fill="#8383ad" font-size="5.9">Ozerki</text><text transform="translate(683 218.3) scale(0.89 1)">Удельная</text><text x="683" y="224.8" font-weight="normal" fill="#8383ad" font-size="5.9">Udelnaya</text><text transform="translate(683 236.7) scale(0.89 1)">Пионерская</text><text x="683" y="243.2" font-weight="normal" fill="#8383ad" font-size="5.9">Pionerskaya</text><text transform="translate(683 254.3) scale(0.89 1)">Чёрная речка</text><text x="683" y="260.8" font-weight="normal" fill="#8383ad" font-size="5.9">Chyornaya Rechka</text><text transform="translate(683 310.6) scale(0.89 1)">Петроградская</text><text x="683" y="317.1" font-weight="normal" fill="#8383ad" font-size="5.9">Petrogradskaya</text><text transform="translate(687 351.5) scale(0.89 1)">Горьковская</text><text x="687" y="343.6" font-weight="normal" fill="#8383ad" font-size="5.9">Gorkovskaya</text><text x="696.6" y="402" text-anchor="end" font-weight="normal" fill="#8383ad" font-size="5.9">Nevsky</text><text x="696.6" y="408.4" text-anchor="end" font-weight="normal" fill="#8383ad" font-size="5.9">Prospekt</text><text transform="translate(696.6 416.4) scale(0.89 1)" text-anchor="end">Невский</text><text transform="translate(696.6 423.8) scale(0.89 1)" text-anchor="end">проспект</text><text transform="translate(664.1 496.1) scale(0.89 1)">Сенная площадь</text><text x="664.1" y="502.6" font-weight="normal" fill="#8383ad" font-size="5.9">Sennaya Ploschad</text><text x="632.7" y="536.5" text-anchor="end" font-weight="normal" fill="#8383ad" font-size="5.9">Tekhnologichesky Institut</text><text transform="translate(632.7 544.9) scale(0.89 1)" text-anchor="end">Технологический</text><text transform="translate(632.7 552.9) scale(0.89 1)" text-anchor="end">институт</text><text transform="translate(646.3 597.4) scale(0.89 1)">Фрунзенская</text><text x="646.3" y="603.9" font-weight="normal" fill="#8383ad" font-size="5.9">Frunzenskaya</text><text transform="translate(646.3 620.4) scale(0.89 1)">Московские Ворота</text><text x="646.3" y="626.9" font-weight="normal" fill="#8383ad" font-size="5.9">Moskovskiye Vorota</text><text transform="translate(646.3 643.3) scale(0.89 1)">Электросила</text><text x="646.3" y="649.8" font-weight="normal" fill="#8383ad" font-size="5.9">Elektrosila</text><text transform="translate(646.3 666.5) scale(0.89 1)">Парк Победы</text><text x="646.3" y="673" font-weight="normal" fill="#8383ad" font-size="5.9">Park Pobedy</text><text transform="translate(646.3 689.5) scale(0.89 1)">Московская</text><text x="646.3" y="696" font-weight="normal" fill="#8383ad" font-size="5.9">Moskovskaya</text><text transform="translate(768.3 156.4) scale(0.89 1)">Девяткино</text><text x="768.3" y="162.9" font-weight="normal" fill="#8383ad" font-size="5.9">Devyatkino</text><text transform="translate(768.3 180.7) scale(0.89 1)">Гражданский</text><text transform="translate(768.3 188.4) scale(0.89 1)">проспект</text><text x="768.3" y="194.9" font-weight="normal" fill="#8383ad" font-size="5.9">Grajdansky Prospekt</text><text transform="translate(768.3 212.2) scale(0.89 1)">Академическая</text><text x="768.3" y="218.7" font-weight="normal" fill="#8383ad" font-size="5.9">Akademicheskaya</text><text transform="translate(768.3 235.9) scale(0.89 1)">Политехническая</text><text x="768.3" y="242.4" font-weight="normal" fill="#8383ad" font-size="5.9">Politekhnicheskaya</text><text transform="translate(768.3 259.9) scale(0.89 1)">Площадь Мужества</text><text x="768.3" y="266.4" font-weight="normal" fill="#8383ad" font-size="5.9">Ploschad Mujestva</text><text transform="translate(768.3 283.9) scale(0.89 1)">Лесная</text><text x="768.3" y="290.4" font-weight="normal" fill="#8383ad" font-size="5.9">Lesnaya</text><text transform="translate(768.3 307.7) scale(0.89 1)">Выборгская</text><text x="768.3" y="314.2" font-weight="normal" fill="#8383ad" font-size="5.9">Viborgskaya</text><text transform="translate(768.3 332.1) scale(0.89 1)">Площадь Ленина</text><text x="768.3" y="338.6" font-weight="normal" fill="#8383ad" font-size="5.9">Ploschad Lenina</text><text transform="translate(768.3 397) scale(0.89 1)">Чернышевская</text><text x="768.3" y="403.5" font-weight="normal" fill="#8383ad" font-size="5.9">Chernishevskaya</text><text transform="translate(768.3 422.4) scale(0.89 1)">Площадь Восстания</text><text x="768.3" y="414.5" font-weight="normal" fill="#8383ad" font-size="5.9">Ploschad Vosstaniya</text><text transform="translate(773.2 444.4) scale(0.89 1)">Маяковская</text><text x="773.2" y="450.9" font-weight="normal" fill="#8383ad" font-size="5.9">Mayakovskaya</text><text transform="translate(752.3 504.9) scale(0.89 1)">Владимирская</text><text x="752.3" y="511.4" font-weight="normal" fill="#8383ad" font-size="5.9">Vladimirskaya</text><text transform="translate(700 530.6) scale(0.89 1)">Пушкинская</text><text x="753" y="531" font-weight="normal" fill="#a9a4b4" font-size="5.9">Pushkinskaya</text><text transform="translate(700 539.3) scale(0.89 1)">Звенигородская</text><text x="768.3" y="539.7" font-weight="normal" fill="#a9a4b4" font-size="5.9">Zvenigorodskaya</text><text transform="translate(573.3 590.9) scale(0.89 1)" text-anchor="end">Балтийская</text><text x="527" y="597.6" font-weight="normal" fill="#8383ad" font-size="5.9">Baltiyskaya</text><text transform="translate(549 628.1) scale(0.89 1)">Нарвская</text><text x="549" y="634.6" font-weight="normal" fill="#8383ad" font-size="5.9">Narvskaya</text><text transform="translate(549 651.9) scale(0.89 1)">Кировский</text><text transform="translate(549 659.6) scale(0.89 1)">завод</text><text x="549" y="666.1" font-weight="normal" fill="#8383ad" font-size="5.9">Kirovsky Zavod</text><text transform="translate(549 682.3) scale(0.89 1)">Автово</text><text x="549" y="688.8" font-weight="normal" fill="#8383ad" font-size="5.9">Avtovo</text><text transform="translate(549 704.7) scale(0.89 1)">Ленинский</text><text transform="translate(512.7 254.3) scale(0.89 1)" fill="#777">Беговая</text><text x="512.7" y="260.8" font-weight="normal" fill="#d9d9e6" font-size="5.9">Begovaya</text><text transform="translate(512.7 309.5) scale(0.89 1)" fill="#5d7a72">Новокрестовская</text><text x="512.7" y="316" font-weight="normal" fill="#cfdcd8" font-size="5.9">Novokrestovskaya</text><text transform="translate(509.8 381.9) scale(0.89 1)" text-anchor="end">Приморская</text><text x="509.8" y="388.4" text-anchor="end" font-weight="normal" fill="#8383ad" font-size="5.9">Primorskaya</text><text transform="translate(551.2 422.7) scale(0.89 1)" text-anchor="end">Василеостровская</text><text x="551.2" y="429.2" text-anchor="end" font-weight="normal" fill="#8383ad" font-size="5.9">Vasileostrovskaya</text><text x="712.1" y="411.6" font-weight="normal" fill="#9fb5b0" font-size="5.9">Gostiny Dvor</text><text transform="translate(712.1 420.4) scale(0.89 1)">Гостиный</text><text transform="translate(712.1 428.4) scale(0.89 1)">Двор</text><text x="842.9" y="444.5" font-weight="normal" fill="#8383ad" font-size="5.9">Ploschad</text><text x="842.9" y="451.5" font-weight="normal" fill="#8383ad" font-size="5.9">Aleksandra Nevskogo</text><text transform="translate(842.9 459.4) scale(0.89 1)">Площадь</text><text transform="translate(842.9 467) scale(0.89 1)">Александра</text><text transform="translate(842.9 474.7) scale(0.89 1)">Невского</text><text transform="translate(841.3 581.1) scale(0.89 1)">Елизаровская</text><text x="841.3" y="587.6" font-weight="normal" fill="#8383ad" font-size="5.9">Yelizarovskaya</text><text transform="translate(841.3 619.5) scale(0.89 1)">Ломоносовская</text><text x="841.3" y="626" font-weight="normal" fill="#8383ad" font-size="5.9">Lomonosovskaya</text><text transform="translate(841.3 658.2) scale(0.89 1)">Пролетарская</text><text x="841.3" y="664.7" font-weight="normal" fill="#8383ad" font-size="5.9">Proletarskaya</text><text transform="translate(841.3 696.7) scale(0.89 1)">Обухово</text><text x="841.3" y="703.2" font-weight="normal" fill="#8383ad" font-size="5.9">Obukhovo</text><text transform="translate(514.7 475.5) scale(0.89 1)" text-anchor="end" fill="#777">Горный</text><text transform="translate(514.7 483.5) scale(0.89 1)" text-anchor="end" fill="#777">институт</text><text x="514.7" y="490" text-anchor="end" font-weight="normal" fill="#dcdce8" font-size="5.9">Gorny Institut</text><text transform="translate(597.4 493.4) scale(0.89 1)" text-anchor="end" fill="#777">Театральная</text><text x="597.4" y="499.9" text-anchor="end" font-weight="normal" fill="#e0dcd8" font-size="5.9">Teatralnaya</text><text transform="translate(637.8 474.6) scale(0.89 1)">Спасская</text><text x="637.8" y="466.7" font-weight="normal" fill="#8383ad" font-size="5.9">Spasskaya</text><text transform="translate(751.8 474.6) scale(0.89 1)" text-anchor="end">Достоевская</text><text x="751.8" y="466.7" text-anchor="end" font-weight="normal" fill="#8383ad" font-size="5.9">Dostoyevskaya</text><text x="776.8" y="459.9" font-weight="normal" fill="#b7aab5" font-size="5.9">Ligovsky Prospekt</text><text transform="translate(822 468.1) scale(0.89 1)" text-anchor="end">Лиговский</text><text transform="translate(822 475.9) scale(0.89 1)" text-anchor="end">проспект</text><text transform="translate(901.6 477.2) scale(0.89 1)">Новочеркасская</text><text x="901.6" y="469.3" font-weight="normal" fill="#8383ad" font-size="5.9">Novocherkasskaya</text><text transform="translate(938.5 507.9) scale(0.89 1)">Ладожская</text><text x="938.5" y="514.4" font-weight="normal" fill="#8383ad" font-size="5.9">Ladojskaya</text><text transform="translate(938.5 540.7) scale(0.89 1)">Проспект</text><text transform="translate(938.5 548.4) scale(0.89 1)">Большевиков</text><text x="938.5" y="554.9" font-weight="normal" fill="#8383ad" font-size="5.9">Prospekt Bolshevikov</text><text transform="translate(938.5 581.3) scale(0.89 1)">Улица Дыбенко</text><text x="938.5" y="587.8" font-weight="normal" fill="#8383ad" font-size="5.9">Ulitsa Dibenko</text><text transform="translate(597.5 228.9) scale(0.89 1)">Комендантский</text><text transform="translate(597.5 236.6) scale(0.89 1)">проспект</text><text x="597.5" y="243.1" font-weight="normal" fill="#8383ad" font-size="5.9">Komendantsky Prospekt</text><text transform="translate(597.5 254.6) scale(0.89 1)">Старая Деревня</text><text x="597.5" y="261.1" font-weight="normal" fill="#8383ad" font-size="5.9">Staraya Derevnya</text><text transform="translate(597.5 294.7) scale(0.89 1)">Крестовский</text><text transform="translate(597.5 302.8) scale(0.89 1)">остров</text><text x="597.5" y="286.8" font-weight="normal" fill="#8383ad" font-size="5.9">Krestovsky Ostrov</text><text transform="translate(586 339.3) scale(0.89 1)" text-anchor="end">Чкаловская</text><text x="586" y="345.8" text-anchor="end" font-weight="normal" fill="#8383ad" font-size="5.9">Chkalovskaya</text><text transform="translate(586 362.2) scale(0.89 1)" text-anchor="end">Спортивная</text><text x="586" y="368.7" text-anchor="end" font-weight="normal" fill="#8383ad" font-size="5.9">Sportivnaya</text><text transform="translate(622.9 451.6) scale(0.89 1)" text-anchor="end">Адмиралтейская</text><text x="554.6" y="458.3" font-weight="normal" fill="#8383ad" font-size="5.9">Admiralteyskaya</text><text transform="translate(606.8 496.4) scale(0.89 1)">Садовая</text><text x="606.8" y="502.9" font-weight="normal" fill="#8383ad" font-size="5.9">Sadovaya</text><text transform="translate(728 566.3) scale(0.89 1)">Обводный канал</text><text x="728" y="558.4" font-weight="normal" fill="#8383ad" font-size="5.9">Obvodny Kanal</text><text transform="translate(743.8 597.4) scale(0.89 1)">Волковская</text><text x="743.8" y="603.9" font-weight="normal" fill="#8383ad" font-size="5.9">Volkovskaya</text><text transform="translate(743.8 625.2) scale(0.89 1)">Бухарестская</text><text x="743.8" y="631.7" font-weight="normal" fill="#8383ad" font-size="5.9">Bukharestskaya</text><text transform="translate(743.8 652.5) scale(0.89 1)">Международная</text><text x="743.8" y="659" font-weight="normal" fill="#8383ad" font-size="5.9">Mejdunarodnaya</text><text transform="translate(743.8 680.7) scale(0.89 1)" fill="#7d7d7d">Проспект Славы</text><text x="743.8" y="687.2" font-weight="normal" fill="#dedede" font-size="5.9">Prospekt Slavy</text><text transform="translate(743.8 707.8) scale(0.89 1)" fill="#7d7d7d">Дунайская</text><text x="645.3" y="547.6" fill="#1a6db9" font-size="5.8" font-family="Liberation Serif,serif">II</text><text x="634" y="569.5" text-anchor="middle" fill="#e2382f" font-size="5.8" font-family="Liberation Serif,serif">I</text><text x="829.3" y="475.3" text-anchor="middle" fill="#2fb24c" font-size="5" font-family="Liberation Serif,serif">I</text><text x="848.5" y="490.5" text-anchor="middle" fill="#f4a62a" font-size="5" font-family="Liberation Serif,serif">II</text><text x="751.5" y="331.5" text-anchor="end" fill="#e2382f" font-size="4.3">Финляндский вокзал</text><text x="751.5" y="337.5" text-anchor="end" font-weight="normal" fill="#a8a8c8" font-size="4.3">Finlandsky rail</text><text x="751.5" y="343" text-anchor="end" font-weight="normal" fill="#a8a8c8" font-size="4.3">terminal</text><text x="756.4" y="449.5" text-anchor="end" fill="#e2382f" font-size="4.3">Московский вокзал</text><text x="756.4" y="455.2" text-anchor="end" font-weight="normal" fill="#b0a8b8" font-size="4.3">Moskovsky rail</text><text x="756.4" y="460" text-anchor="end" font-weight="normal" fill="#b0a8b8" font-size="4.3">terminal</text><text x="716.5" y="441.3" font-weight="normal" fill="#8fa9c8" font-size="3.5" letter-spacing="0.2">NEVSKY AVENUE</text><text x="668" y="441.3" font-weight="normal" fill="#b9b3ad" font-size="3.5" letter-spacing="0.2">НЕВСКИЙ ПРОСПЕКТ</text><text x="694" y="554.5" text-anchor="end" fill="#e2382f" font-size="4.3">Витебский</text><text x="694" y="560" text-anchor="end" fill="#e2382f" font-size="4.3">вокзал</text><text x="694" y="565.5" text-anchor="end" font-weight="normal" fill="#b0a8b8" font-size="4.3">Vitebsky</text><text x="694" y="570.5" text-anchor="end" font-weight="normal" fill="#b0a8b8" font-size="4.3">rail terminal</text><text x="583" y="603.8" fill="#e2382f" font-size="4.3">Балтийский вокзал</text><text x="583" y="609.3" font-weight="normal" fill="#a8a8c8" font-size="4.3">Baltiysky</text><text x="583" y="614.6" font-weight="normal" fill="#a8a8c8" font-size="4.3">rail terminal</text><text x="921.6" y="507" text-anchor="end" fill="#e2382f" font-size="4.3">Ладожский</text><text x="921.6" y="512.5" text-anchor="end" fill="#e2382f" font-size="4.3">вокзал</text><text x="921.6" y="518.5" text-anchor="end" font-weight="normal" fill="#a8a8c8" font-size="4.3">Ladojsky</text><text x="921.6" y="524" text-anchor="end" font-weight="normal" fill="#a8a8c8" font-size="4.3">rail terminal</text><text x="714" y="580.3" text-anchor="end" fill="#2fb39a" font-size="4.3">Автовокзал</text><text x="714" y="585.8" text-anchor="end" font-weight="normal" fill="#a8a8c8" font-size="4.3">Bus terminal</text><text x="467" y="407.5" font-weight="normal" fill="#2b7fbd" font-size="4.7">Морской пассажирский</text><text x="467" y="413" font-weight="normal" fill="#2b7fbd" font-size="4.7">порт</text><text x="479" y="413" font-weight="normal" fill="#9fb7d0" font-size="4.5">Seaport</text><g fill="none" stroke="#2b7fbd" stroke-width=".9"><circle cx="469.3" cy="394.8" r=".9"/><path d="M469.3 395.7 V401.5 M467 397.3 H471.6 M466 398.8 Q466.5 401.6 469.3 401.6 Q472.1 401.6 472.6 398.8"/></g><text x="611" y="319.9" font-weight="normal" fill="#6a9fc4" font-size="9.6" textLength="31.5" lengthAdjust="spacingAndGlyphs" stroke="#6a9fc4" stroke-width="0.25">ПЕТРО-</text><text x="611" y="329.6" font-weight="normal" fill="#6a9fc4" font-size="9.6" textLength="46.8" lengthAdjust="spacingAndGlyphs" stroke="#6a9fc4" stroke-width="0.25">ГРАДСКАЯ</text><text x="611" y="339.4" font-weight="normal" fill="#6a9fc4" font-size="9.6" textLength="41.8" lengthAdjust="spacingAndGlyphs" stroke="#6a9fc4" stroke-width="0.25">СТОРОНА</text><text x="611" y="346.2" fill="#6a9fc4" font-size="3.9" textLength="40.5" lengthAdjust="spacingAndGlyphs" stroke="#6a9fc4" stroke-width="0">PETROGRADSKAYA</text><text x="611" y="351.3" fill="#6a9fc4" font-size="3.9" textLength="10.5" lengthAdjust="spacingAndGlyphs" stroke="#6a9fc4" stroke-width="0">SIDE</text><text x="602" y="360.3" font-weight="normal" fill="#8fb0a0" font-size="3.9" textLength="61" lengthAdjust="spacingAndGlyphs" stroke="#8fb0a0" stroke-width="0.1">АЛЕКСАНДРОВСКИЙ ПАРК</text><text x="609" y="365.3" font-weight="normal" fill="#a9c4b8" font-size="3.7" textLength="52" lengthAdjust="spacingAndGlyphs" stroke="#a9c4b8" stroke-width="0.1">ALEXANDROVSKY PARK</text><text x="475" y="442.7" font-weight="normal" fill="#a0a0b2" font-size="9.3" textLength="74" lengthAdjust="spacingAndGlyphs" stroke="#a0a0b2" stroke-width="0.25">ВАСИЛЬЕВСКИЙ</text><text x="475" y="451.7" font-weight="normal" fill="#a0a0b2" font-size="9.3" textLength="35" lengthAdjust="spacingAndGlyphs" stroke="#a0a0b2" stroke-width="0.25">ОСТРОВ</text><text x="475" y="458.7" font-weight="normal" fill="#b9b9c9" font-size="3.9" textLength="29" lengthAdjust="spacingAndGlyphs" stroke="#b9b9c9" stroke-width="0.1">VASILIEVSKY</text><text x="475" y="463.7" font-weight="normal" fill="#b9b9c9" font-size="3.9" textLength="16" lengthAdjust="spacingAndGlyphs" stroke="#b9b9c9" stroke-width="0.1">ISLAND</text><text x="464.3" y="527.3" font-weight="normal" fill="#5f9cc3" font-size="10" textLength="47.3" lengthAdjust="spacingAndGlyphs" stroke="#5f9cc3" stroke-width="0.25">ФИНСКИЙ</text><text x="464.3" y="536.8" font-weight="normal" fill="#5f9cc3" font-size="10" textLength="31" lengthAdjust="spacingAndGlyphs" stroke="#5f9cc3" stroke-width="0.25">ЗАЛИВ</text><text x="464.3" y="547.3" font-weight="normal" fill="#a9cbdc" font-size="9.6" textLength="23" lengthAdjust="spacingAndGlyphs" stroke="#a9cbdc" stroke-width="0.15">GULF</text><text x="464.3" y="556.8" font-weight="normal" fill="#a9cbdc" font-size="9.6" textLength="53" lengthAdjust="spacingAndGlyphs" stroke="#a9cbdc" stroke-width="0.15">OF FINLAND</text><text x="773.2" y="363.8" font-weight="normal" fill="#6fa3c4" font-size="6.9" textLength="44.6" lengthAdjust="spacingAndGlyphs" stroke="#6fa3c4" stroke-width="0.35">РЕКА НЕВА</text><path id="nv" d="M818.5 364.7 A43 43 0 0 1 869 407" fill="none"/><text font-size="6.7" font-weight="normal" fill="#94bcd4" stroke="#94bcd4" stroke-width=".15"><textPath href="#nv" startOffset="5" textLength="46" lengthAdjust="spacing">NEVA RIVER</textPath></text><path d="M465 569 q4 -2.6 8.5 0 l2.5 -1.4 v2.8 l-2.5 -1.4 q-4.5 2.6 -8.5 0z" fill="none" stroke="#9ec3d6" stroke-width=".6"/><path d="M465 577 q4 -2.6 8.5 0 l2.5 -1.4 v2.8 l-2.5 -1.4 q-4.5 2.6 -8.5 0z" fill="none" stroke="#9ec3d6" stroke-width=".6"/><path d="M465 585 q4 -2.6 8.5 0 l2.5 -1.4 v2.8 l-2.5 -1.4 q-4.5 2.6 -8.5 0z" fill="none" stroke="#9ec3d6" stroke-width=".6"/><text x="556" y="277.8" text-anchor="middle" font-weight="normal" fill="#93b3a6" font-size="3.8" letter-spacing="0.3">ЦПКиО</text><text x="556" y="283.3" text-anchor="middle" font-weight="normal" fill="#a3bfb4" font-size="3.5" letter-spacing="0.55">YELAGIN ISLAND PARK</text><text x="500" y="292.5" text-anchor="end" font-weight="normal" fill="#b8c0c4" font-size="3.4">Зенит Арена</text><text x="500" y="297" text-anchor="end" font-weight="normal" fill="#c4ccd0" font-size="3.4">Zenit Stadium</text><text x="707" y="294" text-anchor="middle" font-weight="normal" fill="#9dbfae" font-size="3.6" letter-spacing="0.4">БОТАНИЧЕСКИЙ САД</text><text x="707" y="299.5" text-anchor="middle" font-weight="normal" fill="#a9c8b8" font-size="3.5" letter-spacing="0.4">BOTANICAL GARDEN</text><text x="663" y="382" text-anchor="middle" font-weight="normal" fill="#a39586" font-size="3.6">Петропавловская крепость</text><text x="663" y="386.5" text-anchor="middle" font-weight="normal" fill="#b9b2b9" font-size="3.6">Petropavlovskaya Fortress</text><text x="602" y="395.5" text-anchor="end" font-weight="normal" fill="#a39586" font-size="3.5">Стрелка Васильевского острова</text><text x="602" y="400" text-anchor="end" font-weight="normal" fill="#b9b2c4" font-size="3.5">Spit of Vasilievsky Island</text><text x="596" y="425.5" text-anchor="end" font-weight="normal" fill="#a39586" font-size="3.5">Адмиралтейство</text><text x="596" y="430" text-anchor="end" font-weight="normal" fill="#a9b4cc" font-size="3.5">Admiralty</text><text x="661" y="400.5" text-anchor="end" font-weight="normal" fill="#a39586" font-size="3.5">Дворцовая</text><text x="661" y="405" text-anchor="end" font-weight="normal" fill="#a39586" font-size="3.5">площадь</text><text x="661" y="409.5" text-anchor="end" font-weight="normal" fill="#a9b4cc" font-size="3.5">Palace Square</text><text x="608" y="463.5" text-anchor="end" font-weight="normal" fill="#a39586" font-size="3.5">Исаакиевский собор</text><text x="608" y="468" text-anchor="end" font-weight="normal" fill="#a9b4cc" font-size="3.5">Saint Isaac's Cathedral</text><text x="571" y="475.5" font-weight="normal" fill="#8fb8d0" font-size="3.6" letter-spacing="0.3">РЕКА МОЙКА</text><text x="598" y="475.5" font-weight="normal" fill="#b5d0dc" font-size="3.6" letter-spacing="0.3">MOIKA RIVER</text><text x="664" y="453" font-weight="normal" fill="#a39586" font-size="3.5">Казанский собор</text><text x="664" y="457.5" font-weight="normal" fill="#a39586" font-size="3.5">Kazan Cathedral</text><text x="715" y="386.3" font-weight="normal" fill="#a39586" font-size="3.3">Храм Спаса на Крови</text><text x="715" y="390.8" font-weight="normal" fill="#a39586" font-size="3.3">Church of the Savior</text><text x="715" y="395.3" font-weight="normal" fill="#a39586" font-size="3.3">on Blood</text><text x="843" y="396.5" font-weight="normal" fill="#a39586" font-size="3.3">Смольный собор</text><text x="843" y="401" font-weight="normal" fill="#a9b4cc" font-size="3.3">Smolny Cathedral</text><text x="855" y="409.5" font-weight="normal" fill="#a39586" font-size="3.3">Смольный</text><text x="855" y="413.5" font-weight="normal" fill="#a9b4cc" font-size="3.3">Smolny Institute</text><text x="842.5" y="521" font-weight="normal" fill="#a39586" font-size="3.2">Александро-</text><text x="842.5" y="525" font-weight="normal" fill="#a39586" font-size="3.2">Невская лавра</text><text x="842.5" y="529.5" font-weight="normal" fill="#a9b4cc" font-size="3.2">Saint Alexander</text><text x="842.5" y="533.5" font-weight="normal" fill="#a9b4cc" font-size="3.2">Nevsky Lavra</text><text x="554" y="517.5" font-weight="normal" fill="#8fb8d0" font-size="3.5" letter-spacing="0.3">КАНАЛ ГРИБОЕДОВА</text><text x="554" y="523" font-weight="normal" fill="#b5d0dc" font-size="3.5" letter-spacing="0.3">GRIBOYEDOVA CANAL</text><text x="520" y="535.5" font-weight="normal" fill="#8fb8d0" font-size="3.4" letter-spacing="0.3">РЕКА ФОНТАНКА</text><text x="520" y="540.5" font-weight="normal" fill="#b5d0dc" font-size="3.4" letter-spacing="0.3">FONTANKA RIVER</text><text x="520" y="578" font-weight="normal" fill="#8fb8d0" font-size="3.4" letter-spacing="0.3">ОБВОДНЫЙ КАНАЛ</text><text x="562" y="578" font-weight="normal" fill="#b5d0dc" font-size="3.4" letter-spacing="0.3">OBVODNY CANAL</text><g fill="none" stroke="#ab9b8b" stroke-width=".65"><path d="M659 376 H684 L680 372 H664 Z M669 372 V364 M674 372 V368 M678 372 V369"/><path d="M596 412.5 H614 M598 412.5 V408 Q605 403 612 408 V412.5 M594 412.5 V405 M616 412.5 V405"/><path d="M615 440 V426 M608 442 H624 M610 442 V438 H620 V442"/><path d="M638 412 H656 V417 H638 Z M647 417 V430 M638 419 H656"/><path d="M610 466 H622 M612 466 V461 Q616 455 620 461 V466 M616 457 V453"/><path d="M653 448 H664 M655 448 V444 H662 V448"/><path d="M709.5 405 V392 M705 405 H714 M706.5 405 V397 M712.5 405 V397 M706.5 400 H712.5"/><path d="M843 391 H849 M844 391 V385 L846 380 L848 385 V391"/><path d="M842 413 H852 V408 L847 405 L842 408 Z"/><path d="M842 516 H860 M844 516 V511 Q851 503 858 511 V516"/><g stroke="#a3ad98"><circle cx="494.2" cy="306.7" r="4.3"/><circle cx="494.2" cy="306.7" r="2"/></g></g><path d="M488.1 179.4 V174.4 H491.5 L504.4 143.5 L515 162.7 L525.6 143.5 L538.5 174.4 H541.9 V179.4 H522.5 V174.4 L520.2 165.4 L518.1 174.4 V179.4 H511.9 V174.4 L509.8 165.4 L507.5 174.4 V179.4 Z" fill="#1a8fd1"/><text x="548.6" y="160.8" font-family="DejaVu Serif,Liberation Serif,serif" font-weight="normal" font-size="20.5" stroke="#111" stroke-width="1" textLength="75.5" lengthAdjust="spacingAndGlyphs">Метро</text><text x="549.2" y="178.6" font-family="DejaVu Serif,Liberation Serif,serif" font-weight="normal" font-size="11.8" fill="#3a8dc6" stroke="#3a8dc6" stroke-width=".5" textLength="39.3" lengthAdjust="spacingAndGlyphs">Metro</text><text x="913.2" y="177.8" font-size="4.4">Линии метро</text><text x="913.2" y="183.4" font-weight="normal" fill="#5a5aa8" font-size="4.4">Metro Lines</text><text x="913.2" y="193.4" font-size="4.4">Красная</text><text x="913.2" y="199" font-weight="normal" fill="#5a5aa8" font-size="4.4">Red line</text><path d="M893 192 H909.2" stroke="#e2382f" stroke-width="2.1"/><circle cx="887.1" cy="192" r="2.9" fill="#fff" stroke="#e2382f" stroke-width="0.55"/><text x="887.1" y="193.4" text-anchor="middle" font-size="4" fill="#e2382f">1</text><text x="913.2" y="206.9" font-size="4.4">Синяя</text><text x="913.2" y="212.5" font-weight="normal" fill="#5a5aa8" font-size="4.4">Blue line</text><path d="M893 205.5 H909.2" stroke="#1a6db9" stroke-width="2.1"/><circle cx="887.1" cy="205.5" r="2.9" fill="#fff" stroke="#1a6db9" stroke-width="0.55"/><text x="887.1" y="206.9" text-anchor="middle" font-size="4" fill="#1a6db9">2</text><text x="913.2" y="220.2" font-size="4.4">Зелёная</text><text x="913.2" y="225.8" font-weight="normal" fill="#5a5aa8" font-size="4.4">Green line</text><path d="M893 218.8 H909.2" stroke="#1fa045" stroke-width="2.1"/><circle cx="887.1" cy="218.8" r="2.9" fill="#fff" stroke="#1fa045" stroke-width="0.55"/><text x="887.1" y="220.2" text-anchor="middle" font-size="4" fill="#1fa045">3</text><text x="913.2" y="233.6" font-size="4.4">Оранжевая</text><text x="913.2" y="239.2" font-weight="normal" fill="#5a5aa8" font-size="4.4">Orange line</text><path d="M893 232.2 H909.2" stroke="#f4a62a" stroke-width="2.1"/><circle cx="887.1" cy="232.2" r="2.9" fill="#fff" stroke="#f4a62a" stroke-width="0.55"/><text x="887.1" y="233.6" text-anchor="middle" font-size="4" fill="#f4a62a">4</text><text x="913.2" y="246.9" font-size="4.4">Фиолетовая</text><text x="913.2" y="252.5" font-weight="normal" fill="#5a5aa8" font-size="4.4">Purple line</text><path d="M893 245.5 H909.2" stroke="#4b1f8c" stroke-width="2.1"/><circle cx="887.1" cy="245.5" r="2.9" fill="#fff" stroke="#4b1f8c" stroke-width="0.55"/><text x="887.1" y="246.9" text-anchor="middle" font-size="4" fill="#4b1f8c">5</text><text x="913.2" y="260.3" font-size="4.4">Строящиеся участки</text><text x="913.2" y="265.9" font-weight="normal" fill="#5a5aa8" font-size="4.4">Under construction</text><path d="M893 258.9 H909.2" stroke="#b7b2dc" stroke-width="2.1"/><path d="M898.5 258.9 H904" stroke="#d9d6ee" stroke-width="2.1"/><text x="913.2" y="276.6" font-size="4.4">Станции пересадок</text><text x="913.2" y="282.2" font-weight="normal" fill="#5a5aa8" font-size="4.4">Transfer stations</text><circle cx="898.2" cy="278.3" r="2.5" fill="#fff" stroke="#f4a62a" stroke-width="1.5"/><circle cx="905.8" cy="278.3" r="2.5" fill="#fff" stroke="#1fa045" stroke-width="1.5"/><path d="M899.5 278.3 H904.5" stroke="#fff" stroke-width="1.6"/><text x="913.2" y="290" font-size="4.4">Кросс-платформенная</text><text x="913.2" y="295.7" font-size="4.4">пересадка</text><text x="913.2" y="301.3" font-weight="normal" fill="#5a5aa8" font-size="4.4">Cross-platform transfer</text><circle cx="898.2" cy="291.7" r="2.5" fill="#fff" stroke="#e2382f" stroke-width="1.5"/><circle cx="905.8" cy="291.7" r="2.5" fill="#fff" stroke="#1a6db9" stroke-width="1.5"/><path d="M899.5 291.7 H904.5" stroke="#fff" stroke-width="1.6"/><circle cx="898.2" cy="291.7" r=".7" fill="#e2382f"/><circle cx="905.8" cy="291.7" r=".7" fill="#1a6db9"/><text x="913.2" y="312.2" font-size="4.4">Железнодорожные станции</text><text x="913.2" y="317.8" font-weight="normal" fill="#5a5aa8" font-size="4.4">Rail terminals</text><g transform="translate(906.9 311.3) scale(0.75)"><rect x="-2.4" y="-3.2" width="4.8" height="6" rx="1" fill="#e0457a"/><rect x="-1.5" y="-2" width="3" height="1.8" fill="#fff"/><rect x="-1.5" y=".8" width="3" height=".9" fill="#fff"/></g><text x="913.2" y="325.5" font-size="4.4">Автобусные маршруты</text><text x="913.2" y="331.1" font-weight="normal" fill="#5a5aa8" font-size="4.4">Bus lines</text><g transform="translate(888.3 324.6) scale(0.75)"><rect x="-2.6" y="-2.8" width="5.2" height="5" rx="1" fill="#2fb39a"/><rect x="-1.7" y="-1.8" width="3.4" height="1.6" fill="#fff"/><rect x="-2" y="2.2" width="1.2" height="1" fill="#2fb39a"/><rect x=".8" y="2.2" width="1.2" height="1" fill="#2fb39a"/></g><text x="891.5" y="326.3" fill="#2fb39a" font-size="4">39</text><path d="M899.5 324.3 H909.5" stroke="#2fb39a" stroke-width=".6"/></svg></div></div></body></html>
